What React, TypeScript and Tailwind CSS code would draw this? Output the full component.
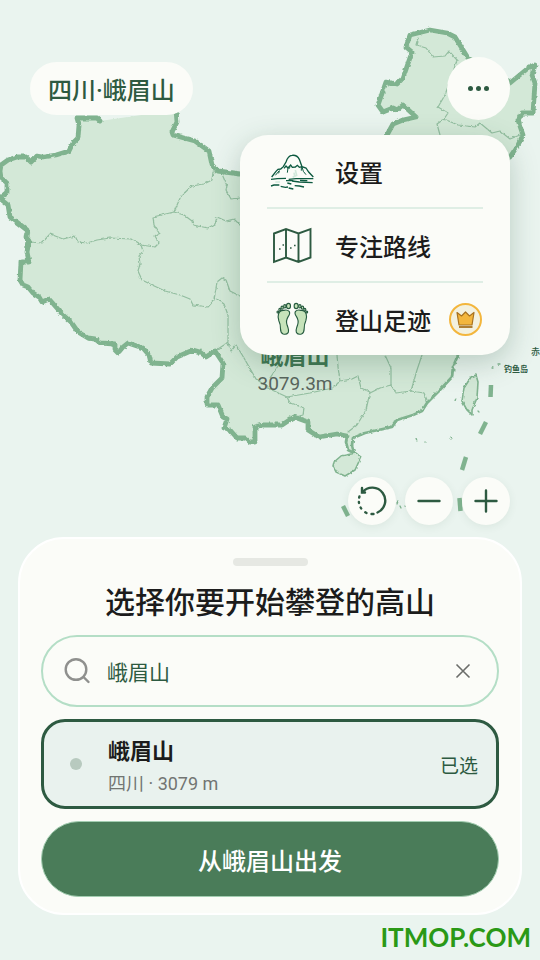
import { useState } from "react";
import type { ReactNode } from "react";

const COUNTRY =
  "M100 121 L97 118 L77 118 L79 125 L78 138 L73 143 L69 151 L56 155 L43 157 L37 156 L31 162 L26 157 L17 157 L8 160 L1 165 L0 171 L1 178 L7 183 L7 192 L1 197 L3 201 L8 205 L10 217 L18 223 L27 230 L26 237 L29 241 L27 252 L29 262 L21 262 L20 280 L23 285 L28 287 L33 293 L39 297 L42 302 L49 299 L63 315 L71 322 L78 332 L88 338 L95 339 L100 343 L115 344 L115 350 L118 353 L123 347 L128 343 L143 348 L149 355 L151 363 L170 364 L177 357 L193 350 L200 352 L206 357 L212 353 L215 351 L223 363 L222 378 L212 388 L207 397 L207 405 L218 405 L223 417 L227 419 L224 428 L230 430 L237 438 L245 438 L250 442 L255 442 L255 427 L262 425 L282 425 L294 417 L308 422 L308 430 L319 437 L337 434 L347 436";
const COAST =
  "L346 442 L348 450 L354 453 L352 445 L353 438 L365 433 L378 430 L392 427 L397 420 L413 415 L422 411 L427 403 L438 392 L452 377 L453 367 L458 355 L462 320 L450 270 L470 200 L500 170 L510 157";
const NORTH =
  "L518 145 L523 135 L518 120 L522 113 L533 113 L535 83 L532 75 L535 65 L527 69 L510 83 L490 70 L468 58 L455 37 L447 33 L430 30 L410 35 L406 47 L412 52 L403 78 L397 84 L386 82 L378 105 L383 112 L393 108 L397 110 L403 105 L416 117 L403 120 L393 124 L387 135 L340 180 L280 182 L240 174 L218 171 L212 165 L209 151 L195 141 L173 135 L172 132 L177 122 L176 110";
const PROVINCES = [
  "M30 242 L42 243 L50 234 L63 239 L75 236 L78 242 L87 243 L97 240 L110 238 L131 239 L141 245 L155 247 L159 243 L155 236 L159 233 L154 225 L153 217 L174 212 L181 196 L192 186 L204 184 L212 180 L213 172 L220 171",
  "M222 174 L227 186 L226 190 L231 199 L240 198",
  "M174 212 L184 215 L192 221 L193 225 L208 228 L215 224 L217 217 L226 221 L234 219 L240 225",
  "M141 245 L143 251 L139 256 L140 264 L138 271 L142 280 L150 284 L165 291 L180 295 L190 299 L193 305 L208 307 L214 300 L217 282 L222 278 L226 280 L230 291 L240 296",
  "M214 297 L224 304 L228 315 L228 342 L224 345 L215 351",
  "M228 343 L231 351 L236 345 L241 353 L244 358 L256 379 L272 390 L287 397",
  "M337 355 L338 367 L340 381 L333 388 L310 393 L287 397 L290 403 L304 408 L303 415 L296 417",
  "M340 381 L352 379 L358 376 L361 388 L370 392 L366 410 L357 425 L348 432",
  "M385 355 L391 368 L391 385 L380 388 L370 393",
  "M391 385 L396 393 L411 391 L424 393 L427 400",
  "M422 355 L417 370 L411 391",
  "M270 378 L278 366 L280 355",
  "M418 38 L416 45 L426 48 L433 57 L445 56 L449 51 L457 60 L453 72 L445 95 L438 107 L448 113 L444 119 L437 124 L440 135",
  "M444 119 L458 125 L475 127 L480 123 L492 133 L500 131 L510 139 L520 135",
];
const ISLETS = ["M450 438 l1 1", "M425 442 l1 1", "M416 438 l1 3", "M456 398 l-1 3", "M454 369 l1 2", "M478 411 l1 1", "M492 368 l1 0", "M498 364 l2 0", "M398 501 l-1 3", "M400 506 l1 2", "M405 506 l1 1"];

function MapBackdrop() {
  return (
    <svg
      className="absolute inset-0 h-full w-full"
      viewBox="0 0 540 960"
      preserveAspectRatio="xMidYMid slice"
      aria-hidden="true"
    >
      <defs>
        <filter id="rough" x="-5%" y="-5%" width="110%" height="110%">
          <feTurbulence type="fractalNoise" baseFrequency="0.25" numOctaves="2" seed="4" />
          <feDisplacementMap in="SourceGraphic" scale="3" xChannelSelector="R" yChannelSelector="G" />
        </filter>
      </defs>
      <g filter="url(#rough)" strokeLinejoin="round" strokeLinecap="round">
        <path d={`${COUNTRY} ${COAST} ${NORTH} Z`} fill="#d3e8d7" />
        <g fill="none" stroke="#92bd9f" strokeWidth="1.2">
          {PROVINCES.map((d) => (
            <path key={d} d={d} />
          ))}
        </g>
        <path d={COUNTRY} fill="none" stroke="#80b38f" strokeWidth="4.800" />
        <path d={`M347 436 ${COAST}`} fill="none" stroke="#80b38f" strokeWidth="2.800" />
        <path d={`M510 157 ${NORTH}`} fill="none" stroke="#80b38f" strokeWidth="4.800" />
        <g fill="#d3e8d7" stroke="#80b38f" strokeWidth="1.6">
          <path d="M471 377 L476 375 L478 382 L477 398 L472 410 L472 415 L467 410 L462 401 L464 388 Z" />
          <path d="M341 456 L356 453 L361 457 L355 470 L345 476 L336 472 L333 466 L334 462 Z" />
        </g>
        <g fill="none" stroke="#80b38f" strokeWidth="1.3">
          {ISLETS.map((d) => (
            <path key={d} d={d} />
          ))}
        </g>
      </g>
      <g stroke="#80b38f" strokeWidth="4.500">
        <path d="M491 385 L490.500 397" />
        <path d="M486 422 L480 434" />
        <path d="M466 457 L462 470" />
        <path d="M459.500 498 L460.500 511" />
        <path d="M343 506 L348 516" />
      </g>
      <g fontFamily="Roboto, 'Noto Sans CJK SC', sans-serif">
        <text x="531" y="355" fontSize="9" fontWeight="500" fill="#2d5a41">赤</text>
        <text x="504" y="372" fontSize="8" fontWeight="700" fill="#2d5a41">钓鱼岛</text>
        <text x="295" y="364" textAnchor="middle" fontSize="23" fontWeight="700" fill="#3f7652">峨眉山</text>
        <text x="295" y="390" textAnchor="middle" fontSize="19" fill="#59655d">3079.3m</text>
      </g>
    </svg>
  );
}

function MountainIcon() {
  return (
    <svg viewBox="30 25 135 111" className="h-[37px] w-[45px]" fill="none" stroke="#0d5a40" strokeWidth="4" aria-hidden="true">
      <path d="M35 97 L48 80 L54 74 L62 73 L70 66 L78 52 Q84 33 96 32 Q111 30 118 44 L126 66 L138 70 L146 82 L160 97" />
      <path d="M72 71 L78 64 L84 70 L92 61 L97 68 L106 67 L112 62 L118 68 L126 66" />
      <path d="M84 70 L82 84 M90 66 L88 72 M126 66 L130 80 L138 90 M124 66 L124 78 M46 92 L58 78 M58 78 L56 86" strokeWidth="3" />
      <path d="M106 76 L110 92 L98 98 M102 84 L104 94 M46 112 L60 112" stroke="#d2e9dc" strokeWidth="5" />
      <path d="M33 104 L52 102 L78 101 M78 108 L100 108 M86 104 L108 102 L160 102 M96 109 L118 112 L158 114 M120 107 L142 108" />
      <path d="M33 124 L42 121 L58 121 M62 125 L76 128 L84 127 M86 130 L100 133 M104 123 L118 124 L132 127 M82 115 L94 118" />
    </svg>
  );
}

function RouteIcon() {
  return (
    <svg viewBox="0 0 45 37" className="h-[37px] w-[45px]" fill="none" stroke="#2d5a41" strokeWidth="1.900" aria-hidden="true">
      <path d="M4 6.500 L16 2 L28.500 6.500 L40.500 2 V30.500 L28.500 35 L16 30.500 L4 35 Z M16 2 V30.500 M28.500 6.500 V35" />
      <path d="M9 22 h1.600 M12.500 18 h1.500 M20 21 h1.600 M24 18.500 h1.600" strokeWidth="1.600" />
    </svg>
  );
}

function FeetIcon() {
  const foot = (
    <g>
      <path d="M56 294 Q60 282 72 283 Q82 280 88 286 Q92 292 85 302 Q77 314 82 328 Q88 343 85 350 Q80 357 70 354 Q62 350 62 338 Q62 324 57 314 Q53 304 56 294 Z" />
      <ellipse cx="86" cy="270" rx="6" ry="8" />
      <ellipse cx="75" cy="271" rx="3.500" ry="5" />
      <ellipse cx="67" cy="275" rx="3.500" ry="4.500" />
      <ellipse cx="60" cy="281" rx="3" ry="4" />
      <ellipse cx="54" cy="288" rx="2.500" ry="3" />
    </g>
  );
  return (
    <svg viewBox="48 258 100 102" className="h-[34px] w-[45px]" fill="#c6e3ba" stroke="#275c40" strokeWidth="3.400" aria-hidden="true">
      {foot}
      <g transform="translate(195 0) scale(-1 1)">{foot}</g>
    </svg>
  );
}

function CrownBadge() {
  return (
    <svg viewBox="0 0 33 33" className="mr-px ml-auto h-[33px] w-[33px]" role="img" aria-label="VIP">
      <circle cx="16.500" cy="16.500" r="15.500" fill="#f3f1df" stroke="#f3b63d" strokeWidth="2" />
      <path d="M8 9.500 L12.500 13 L16.500 9 L20.500 13 L25 9.500 L23 22 H10 Z" fill="#f3b63d" stroke="#a87220" strokeWidth="1.200" strokeLinejoin="round" />
      <path d="M10 24 H23.500" stroke="#a87220" strokeWidth="1.800" />
    </svg>
  );
}

function MenuRow({ icon, label, badge }: { icon: ReactNode; label: string; badge?: ReactNode }) {
  return (
    <button
      type="button"
      role="menuitem"
      className="flex h-[74px] w-full items-center border-b-2 border-[#dfeee5] pl-[3px] text-left text-2xl font-medium text-[#1c1c1c] last:h-[72px] last:border-b-0"
    >
      {icon}
      <span className="ml-5 pt-1.5">{label}</span>
      {badge}
    </button>
  );
}

function RoundButton({ label, onClick, children }: { label: string; onClick?: () => void; children: ReactNode }) {
  return (
    <button
      type="button"
      aria-label={label}
      onClick={onClick}
      className="h-12 w-12 rounded-full bg-[#fbfcf8] shadow-[0_2px_8px_rgba(45,90,65,0.08)]"
    >
      <svg viewBox="0 0 48 48" fill="none" stroke="#2d5a41" strokeWidth="2.400" strokeLinecap="round" aria-hidden="true">
        {children}
      </svg>
    </button>
  );
}

export default function App() {
  const [query, setQuery] = useState("峨眉山");

  return (
    <main className="relative flex min-h-screen flex-col overflow-hidden bg-[#eaf4ef] font-[Roboto,'Noto_Sans_CJK_SC',sans-serif] text-[#1c1c1c]">
      <MapBackdrop />

      <header className="relative flex items-center justify-between px-[30px] pt-[57px]">
        <h1 className="flex h-[53px] items-center rounded-full bg-[#fbfcf8] px-[18px] pt-1 text-2xl font-medium text-[#2d5a41]">
          四川·峨眉山
        </h1>
        <button
          type="button"
          aria-label="更多"
          aria-expanded="true"
          className="flex h-[63px] w-[63px] items-center justify-center gap-[3px] rounded-full bg-[#fbfcf8]"
        >
          <span className="h-[5px] w-[5px] rounded-full bg-[#2d5a41]" />
          <span className="h-[5px] w-[5px] rounded-full bg-[#2d5a41]" />
          <span className="h-[5px] w-[5px] rounded-full bg-[#2d5a41]" />
        </button>

        <div
          role="menu"
          className="absolute top-[135px] right-[30px] w-[270px] rounded-[28px] bg-[#fbfcf8] px-[27px] shadow-[0_8px_28px_rgba(45,90,65,0.26)]"
        >
          <MenuRow icon={<MountainIcon />} label="设置" />
          <MenuRow icon={<RouteIcon />} label="专注路线" />
          <MenuRow icon={<FeetIcon />} label="登山足迹" badge={<CrownBadge />} />
        </div>
      </header>

      <div className="relative mt-auto flex justify-end gap-[9px] px-[30px] pb-3">
        <RoundButton label="重置">
          <path d="M14.500 15 A13 13 0 1 1 29.500 35.500" />
          <path d="M25.500 37 h-2 M18.500 36 l-1.200 -.7 M13.200 31.500 l-.6 -1 M11 26 l-.1 -1 M11.200 20.500 l.2 -1" />
          <path d="M14 11 V15.500 H17" />
        </RoundButton>
        <RoundButton label="缩小">
          <path d="M13.500 24 H34.500" />
        </RoundButton>
        <RoundButton label="放大">
          <path d="M13.500 24 H34.500 M24 13.500 V34.500" />
        </RoundButton>
      </div>

      <section className="relative mx-[18px] flex flex-col rounded-[46px] border-2 border-white bg-[#fbfcf8] px-[21px] pt-[19px] pb-4">
        <div className="h-2 w-[75px] self-center rounded-full bg-[#e6e8e3]" />
        <h2 className="mt-[14px] mb-[10px] text-center text-[30px] leading-[45px] font-medium">选择你要开始攀登的高山</h2>

        <form className="flex flex-col gap-3" onSubmit={(e) => e.preventDefault()}>
          <div className="flex h-[72px] items-center rounded-full border-2 border-[#b4dec6] pr-[22px] pl-5">
            <label htmlFor="peak" aria-label="搜索">
              <svg viewBox="0 0 30 30" className="h-[30px] w-[30px]" fill="none" stroke="#8f908e" strokeWidth="2.400" aria-hidden="true">
                <circle cx="13" cy="13.500" r="10.300" />
                <path d="M20.500 21 L25.500 26" strokeLinecap="round" />
              </svg>
            </label>
            <input
              id="peak"
              type="text"
              value={query}
              onChange={(e) => setQuery(e.target.value)}
              className="ml-[14px] min-w-0 flex-1 bg-transparent pt-1.5 text-[21px] text-[#2d5a41] outline-none"
            />
            <button type="button" aria-label="清除" onClick={() => setQuery("")} className="h-6 w-6">
              <svg viewBox="0 0 24 24" fill="none" stroke="#6b6d6a" strokeWidth="1.600" aria-hidden="true">
                <path d="M5.500 5.500 L18.500 18.500 M18.500 5.500 L5.500 18.500" />
              </svg>
            </button>
          </div>

          <button
            type="button"
            aria-pressed="true"
            className="flex h-[90px] items-center rounded-3xl border-[3px] border-[#2d5a41] bg-[#e9f2ee] pr-[18px] pl-[26px] text-left"
          >
            <span className="h-3 w-3 rounded-full bg-[#b8cabf]" />
            <span className="ml-[26px] flex flex-1 flex-col pt-1">
              <span className="text-[22px] leading-9 font-bold">峨眉山</span>
              <span className="text-lg leading-7 text-[#727572]">四川 · 3079 m</span>
            </span>
            <span className="pt-1.5 text-[19px] text-[#2d5a41]">已选</span>
          </button>

          <button
            type="submit"
            className="h-[76px] rounded-full border border-[#a3cdb1] bg-[#4a7c59] pt-1.5 text-2xl font-medium text-white"
          >
            从峨眉山出发
          </button>
        </form>
      </section>

      <footer className="relative flex h-[45px] items-center justify-end pr-[9px] font-[Lato,sans-serif] text-[26px] font-bold text-[#2a9916]">
        ITMOP.COM
      </footer>
    </main>
  );
}
